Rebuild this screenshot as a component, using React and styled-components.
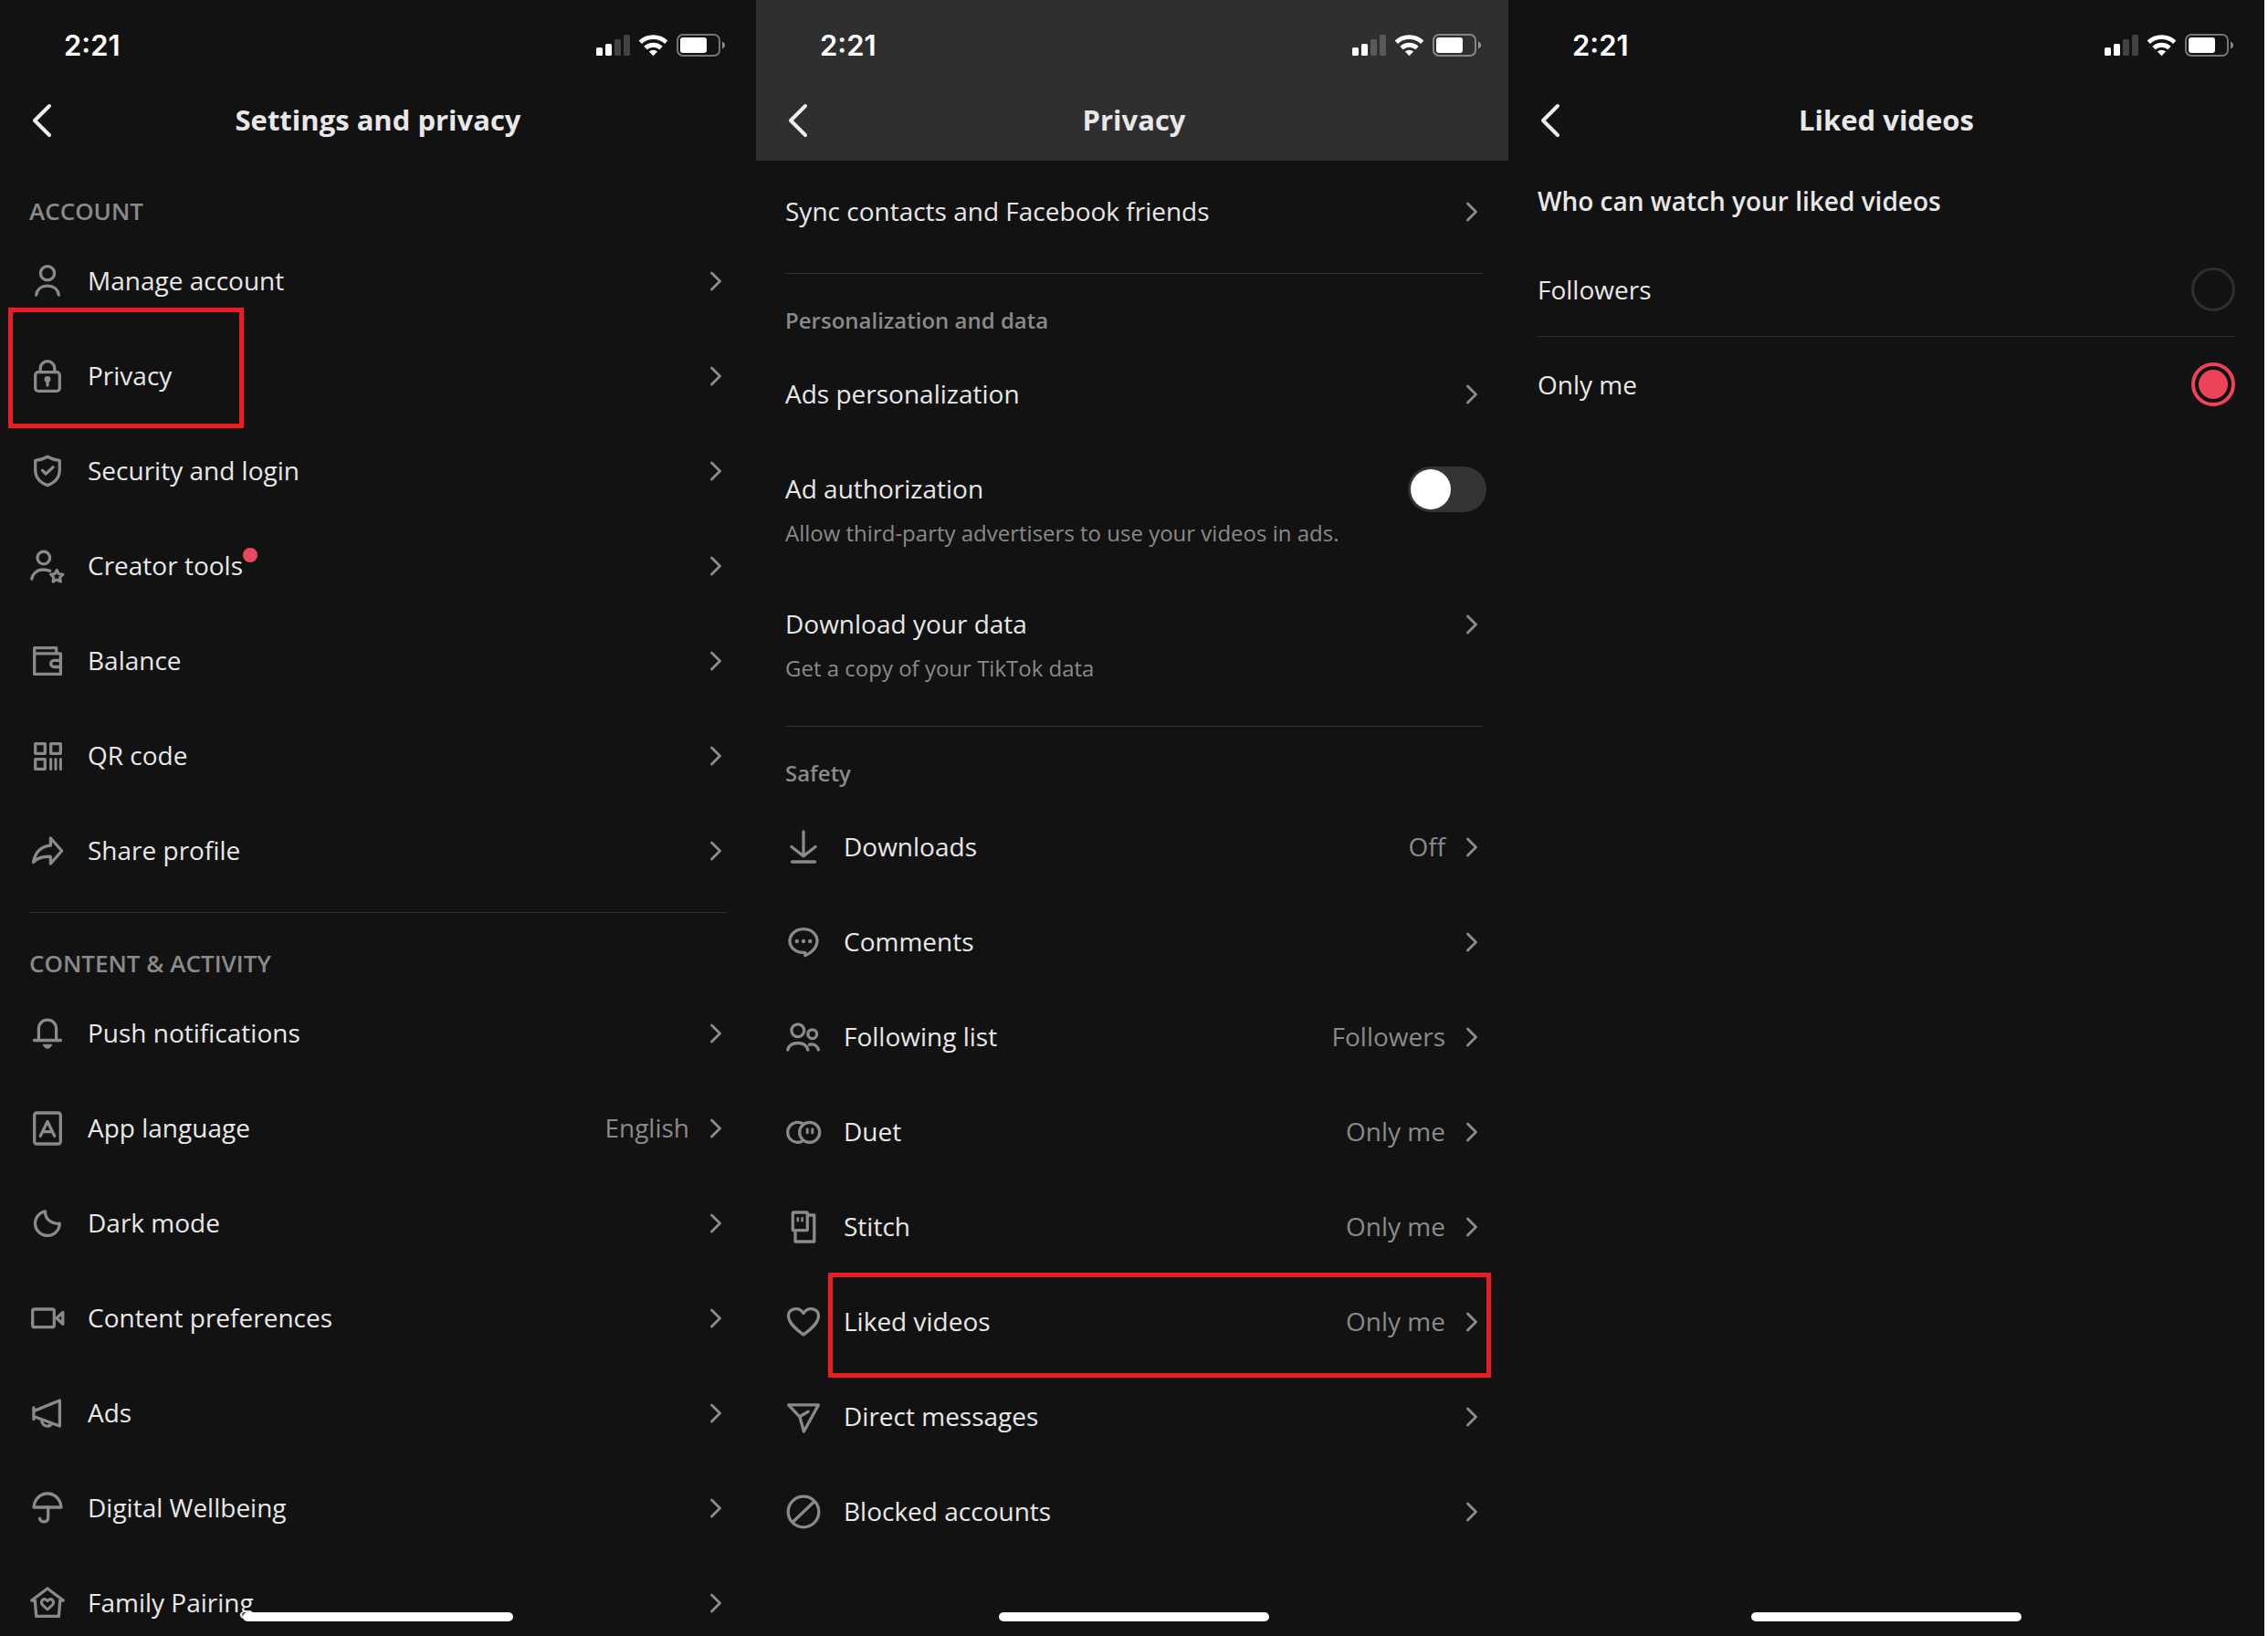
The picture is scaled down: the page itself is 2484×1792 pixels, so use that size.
import React, { useState } from "react";
import styled, { createGlobalStyle, css } from "styled-components";

const color = {
  page: "#ffffff",
  bg: "#121212",
  raised: "#2f2f2f",
  text: "#e8e8e8",
  muted: "#8a8a8a",
  line: "#2d2d2d",
  accent: "#ec4359",
  mark: "#ed1c24",
};

const GlobalStyle = createGlobalStyle`
  *, *::before, *::after { box-sizing: border-box; }
  body {
    margin: 0;
    background: ${color.page};
    color: ${color.text};
    font-family: "Open Sans", "Noto Sans", sans-serif;
  }
`;

const Screens = styled.main`
  display: grid;
  grid-template-columns: 207fr 206fr 207fr;
  height: 100vh;
  padding-right: 4px;
  overflow: hidden;
`;

const Phone = styled.section`
  position: relative;
  min-width: 0;
  overflow: hidden;
  background: ${color.bg};
`;

const PhoneContent = styled.div`
  position: relative;
  width: ${(p) => (p.$bleed ? "calc(100% + 4px)" : "100%")};
  height: 100%;
`;

const Header = styled.header`
  background: ${(p) => (p.$raised ? color.raised : color.bg)};
`;

const StatusBar = styled.div`
  display: flex;
  align-items: center;
  justify-content: space-between;
  height: 88px;
  padding: 12px 32px 0 70px;
`;

const Clock = styled.time`
  color: #ffffff;
  font-family: Inter, sans-serif;
  font-size: 31px;
  font-weight: 600;
  line-height: 40px;
`;

const StatusIcons = styled.svg`
  display: block;
  width: 144px;
  height: 28px;
`;

const NavBar = styled.nav`
  display: grid;
  grid-template-columns: 1fr auto 1fr;
  align-items: center;
  height: 88px;
  padding: 0 32px;
`;

const BackButton = styled.button`
  display: flex;
  justify-self: start;
  padding: 0;
  border: 0;
  background: none;
  color: #ededed;
  cursor: pointer;
`;

const Title = styled.h1`
  margin: 0;
  padding-bottom: 2px;
  font-size: 31px;
  font-weight: 700;
  line-height: 42px;
`;

const Group = styled.section`
  padding: ${(p) => p.$top}px 32px 0;
`;

const GroupLabel = styled.h2`
  margin: 0 0 ${(p) => (p.$caps ? 8 : 12)}px;
  color: ${color.muted};
  font-size: ${(p) => (p.$caps ? 26 : 24)}px;
  font-weight: 600;
  line-height: 34px;
`;

const Divider = styled.hr`
  height: 1px;
  margin: 15px 32px 0;
  border: 0;
  background: ${color.line};
`;

const List = styled.ul`
  margin: 0;
  padding: 0;
  list-style: none;
`;

const marks = {
  start: css`
    top: -23px;
    left: -23px;
    width: 258px;
    height: 132px;
  `,
  wide: css`
    top: -2px;
    left: 47px;
    right: -9px;
    height: 115px;
  `,
};

const Item = styled.li`
  position: relative;

  ${(p) =>
    p.$mark &&
    css`
      &::after {
        content: "";
        position: absolute;
        border: 5px solid ${color.mark};
        pointer-events: none;
        ${marks[p.$mark]}
      }
    `}
`;

const rowLayout = css`
  display: flex;
  align-items: flex-start;
  padding: 32px 0;
  color: inherit;
  text-decoration: none;
`;

const RowLink = styled.a`
  ${rowLayout}
`;

const SwitchRow = styled.div`
  ${rowLayout}
`;

const RowText = styled.span`
  display: flex;
  flex: 1;
  flex-direction: column;
  align-items: flex-start;
  gap: 14px;
  min-width: 0;
`;

const RowTitle = styled.span`
  position: relative;
  font-size: 28px;
  line-height: 38px;
`;

const RowNote = styled.span`
  color: ${color.muted};
  font-size: 24px;
  line-height: 32px;
`;

const RowValue = styled.span`
  margin-right: 22px;
  color: ${color.muted};
  font-size: 28px;
  line-height: 38px;
`;

const NewDot = styled.span`
  position: absolute;
  top: 0;
  left: 100%;
  width: 16px;
  height: 16px;
  border-radius: 50%;
  background: #ea4a5f;
`;

const RowIcon = styled.svg`
  flex: none;
  width: 40px;
  height: 40px;
  margin-right: 24px;
  color: ${color.muted};
`;

const ChevronIcon = styled.svg`
  flex: none;
  width: 14px;
  height: 40px;
  margin-right: 5px;
  color: ${color.muted};
`;

const Switch = styled.input`
  flex: none;
  appearance: none;
  width: 86px;
  height: 50px;
  margin: -5px -4px;
  padding: 3px;
  border-radius: 25px;
  background: #343436;
  cursor: pointer;

  &::before {
    content: "";
    display: block;
    width: 44px;
    height: 44px;
    border-radius: 50%;
    background: #ffffff;
  }

  &:checked {
    background: ${color.accent};
  }

  &:checked::before {
    margin-left: auto;
  }
`;

const Choices = styled.fieldset`
  min-width: 0;
  margin: 0;
  padding: 24px 32px 0;
  border: 0;
`;

const ChoicesTitle = styled.legend`
  float: left;
  width: 100%;
  padding: 0 0 25px;
  font-size: 28px;
  font-weight: 600;
  line-height: 40px;
`;

const Choice = styled.label`
  display: flex;
  clear: both;
  align-items: center;
  justify-content: space-between;
  height: 104px;
  border-bottom: ${(p) => (p.$last ? "0" : `1px solid ${color.line}`)};
  font-size: 28px;
  line-height: 38px;
  cursor: pointer;
`;

const Radio = styled.input`
  appearance: none;
  display: grid;
  place-items: center;
  width: 48px;
  height: 48px;
  margin: 0;
  border: 3px solid ${color.raised};
  border-radius: 50%;
  cursor: pointer;

  &:checked {
    border: 4px solid ${color.accent};
  }

  &:checked::before {
    content: "";
    width: 32px;
    height: 32px;
    border-radius: 50%;
    background: ${color.accent};
  }
`;

const HomeIndicator = styled.div`
  position: absolute;
  bottom: 16px;
  left: 50%;
  width: 296px;
  height: 10px;
  margin-left: -148px;
  border-radius: 5px;
  background: #ffffff;
`;

const icons = {
  person: (
    <>
      <circle cx="20" cy="11.3" r="7.6" />
      <path d="M7.6 35C8.6 28.8 13.6 25.2 20 25.2S31.4 28.8 32.4 35" />
    </>
  ),
  lock: (
    <>
      <rect x="6.7" y="15.7" width="26.6" height="20.6" rx="3" />
      <path d="M12.2 15.5V11.5a7.8 7.8 0 0 1 15.6 0v4" />
      <path d="M20 24v6" />
      <circle cx="20" cy="23.5" r="1.8" fill="currentColor" />
    </>
  ),
  shield: (
    <>
      <path d="M20 4.2c4 2.3 8.5 3.8 13.3 4.1v10c0 8.2-5 14.5-13.3 17.3C11.7 32.8 6.7 26.5 6.7 18.3v-10C11.5 8 16 6.5 20 4.2z" />
      <path d="M14.5 19.2l3.7 3.9 7.8-7.4" />
    </>
  ),
  creator: (
    <>
      <circle cx="15.8" cy="11" r="6.8" />
      <path d="M2.7 34.2C4 27.8 9 24 15.5 24c2.700 0 5 .5 7.200 1.400" />
      <path
        strokeWidth="3"
        d="M30.200 24.300l2.100 4.200 4.700.7-3.400 3.300.8 4.600-4.200-2.200-4.200 2.200.8-4.600-3.400-3.300 4.700-.7z"
      />
    </>
  ),
  wallet: (
    <>
      <path d="M5.700 11.800h28.700v22.600H5.700z" />
      <path d="M5.700 11.800V5.700h24v6" />
      <path d="M34 19.300h-6.700a3.600 3.600 0 0 0 0 7.200H34" />
    </>
  ),
  qr: (
    <>
      <path d="M6.700 6.700h10.600v10.600H6.700zM23.700 6.700h10.600v10.600H23.700zM6.700 23.700h10.600v10.600H6.700z" />
      <path strokeWidth="3" d="M23.600 23.500v11M29 23.500v11M34.400 23.500v11" />
    </>
  ),
  share: (
    <path d="M23.400 6L35.700 20 23.400 34v-7.700C14.500 26 8.500 27.500 4.500 32.500 6.600 22 13 15 23.400 14.200z" />
  ),
  bell: (
    <>
      <path d="M5.500 27.500h29M10.400 27V14.700a9.600 9.600 0 0 1 19.200 0V27" />
      <path
        stroke="none"
        fill="currentColor"
        d="M15.500 31.700h9c.6 0 .8.500.5 1-.9 2.300-2.800 4-5 4s-4.100-1.700-5-4c-.3-.5-.1-1 .5-1z"
      />
    </>
  ),
  language: (
    <>
      <rect x="5.700" y="3" width="28.600" height="34" rx="2.500" />
      <path d="M12.300 28.300L20 12.500l7.700 15.800M15 23.600h10" />
    </>
  ),
  moon: (
    <path d="M17.600 6.800A13.400 13.400 0 1 0 33.300 20.200C24.500 21 17 15.500 17.600 6.800z" />
  ),
  camera: (
    <>
      <rect x="3.700" y="10" width="23.600" height="19.700" rx="2" />
      <path d="M30 19.800l6.800-6.300v12.800z" />
    </>
  ),
  megaphone: (
    <>
      <path d="M4.900 14v12.500M5 17.600L33.400 6v28L5 23.500" />
      <path d="M13.600 27.500c.4 4 3 6.700 6.300 6.700 2 0 3.600-1 4.700-2.700" />
    </>
  ),
  umbrella: (
    <>
      <path d="M5 19C5.600 10.300 11.800 4 20 4s14.400 6.300 15 15z" />
      <path d="M20.700 19v11.500c0 5.400-8 5.700-9.200.8" />
    </>
  ),
  home: (
    <>
      <path d="M2.700 17L20 4l17.300 13h-3.500l-1.400 17.300H7.700L6.300 17z" />
      <path
        strokeWidth="3"
        d="M20 27l-5.500-5.200c-2.700-3 .4-7.500 3.800-5.700.8.400 1.300 1 1.700 1.700.4-.7.900-1.300 1.700-1.700 3.400-1.800 6.500 2.700 3.800 5.700z"
      />
    </>
  ),
  download: (
    <path d="M20 3v26.500M6.900 19.500L20 29.700l13.100-10.200M7.500 36h25" />
  ),
  comment: (
    <>
      <path d="M21.800 34.600v-3.300H20C11.500 31.300 5 25.900 5 18.700S11.500 5.700 20 5.700s15 5.600 15 12.800c0 7.500-6.500 13.400-13.200 16.100z" />
      <g fill="currentColor" stroke="none">
        <circle cx="12.800" cy="19" r="2.200" />
        <circle cx="20" cy="19" r="2.200" />
        <circle cx="27.200" cy="19" r="2.200" />
      </g>
    </>
  ),
  people: (
    <>
      <circle cx="13.800" cy="12.700" r="6.900" />
      <circle cx="29.700" cy="16.700" r="4.900" />
      <path d="M2.700 34C4 29 8.500 26.500 13.800 26.500S23.600 29 24.900 34" />
      <path d="M26.500 28.200c4.800-1.300 8.800 1 10 5.800" />
    </>
  ),
  duet: (
    <>
      <circle cx="26.700" cy="20.300" r="11" />
      <path d="M19.500 11A11 11 0 1 0 19.500 29.600" />
      <path strokeWidth="3" d="M24.200 16.700v4M29.800 16.700v4" />
    </>
  ),
  stitch: (
    <>
      <rect x="8.300" y="4" width="16" height="19.700" rx="1" />
      <path d="M26 7h5.800v29H11v-10.500" />
      <path strokeWidth="2.600" d="M13.800 10.300v3M18.600 10.300v3" />
    </>
  ),
  heart: (
    <path d="M20 34C14 29.500 3.500 22 3.500 13.600 3.500 5.500 14.500 2.200 20 10.500 25.500 2.200 36.500 5.500 36.500 13.600 36.500 22 26 29.500 20 34z" />
  ),
  send: (
    <path d="M3.600 6.900h32.800L20.400 36 16 20.200zM16.200 19.500l9-5.300" />
  ),
  blocked: (
    <>
      <circle cx="20" cy="20" r="16.800" />
      <path d="M31.500 9L8.500 31" />
    </>
  ),
};

function Icon({ name }) {
  return (
    <RowIcon
      viewBox="0 0 40 40"
      fill="none"
      stroke="currentColor"
      strokeWidth="3.3"
      strokeLinecap="round"
      strokeLinejoin="round"
      aria-hidden="true"
    >
      {icons[name]}
    </RowIcon>
  );
}

function Chevron() {
  return (
    <ChevronIcon viewBox="0 0 14 40" fill="none" aria-hidden="true">
      <path
        d="M2.500 11l9 9-9 9"
        stroke="currentColor"
        strokeWidth="3"
        strokeLinecap="round"
        strokeLinejoin="round"
      />
    </ChevronIcon>
  );
}

function PhoneHeader({ title, raised }) {
  return (
    <Header $raised={raised}>
      <StatusBar>
        <Clock>2:21</Clock>
        <StatusIcons viewBox="1 0 144 28" fill="#ffffff" aria-hidden="true">
          <rect x="2" y="16" width="7" height="9" rx="1.500" />
          <rect x="12" y="12" width="7" height="13" rx="1.500" />
          <g opacity="0.2">
            <rect x="22" y="7" width="7" height="18" rx="1.500" />
            <rect x="32" y="2" width="7" height="23" rx="1.500" />
          </g>
          <path d="M64.500 25.200l-4.600-4.700a6.800 6.800 0 0 1 9.200 0z" />
          <g fill="none" stroke="#ffffff" strokeWidth="4.800">
            <path d="M56 16.600a12.500 12.500 0 0 1 17 0" />
            <path d="M50.300 10.300a20.700 20.700 0 0 1 28.400 0" />
          </g>
          <rect
            x="91"
            y="2"
            width="46"
            height="23"
            rx="6"
            fill="none"
            stroke="#ffffff"
            strokeOpacity="0.42"
            strokeWidth="2"
          />
          <rect x="94" y="5" width="29" height="17" rx="3" />
          <path d="M140 9.500c4 1.500 4 6.500 0 8z" opacity="0.5" />
        </StatusIcons>
      </StatusBar>
      <NavBar>
        <BackButton type="button" aria-label="Back">
          <svg width="28" height="40" viewBox="0 0 28 40" fill="none">
            <path
              d="M22 4L6 20l16 16"
              stroke="currentColor"
              strokeWidth="4"
              strokeLinecap="round"
              strokeLinejoin="round"
            />
          </svg>
        </BackButton>
        <Title>{title}</Title>
      </NavBar>
    </Header>
  );
}

function Row({ icon, title, note, value, isNew, mark }) {
  return (
    <Item $mark={mark}>
      <RowLink href="#">
        {icon && <Icon name={icon} />}
        <RowText>
          <RowTitle>
            {title}
            {isNew && <NewDot />}
          </RowTitle>
          {note && <RowNote>{note}</RowNote>}
        </RowText>
        {value && <RowValue>{value}</RowValue>}
        <Chevron />
      </RowLink>
    </Item>
  );
}

const accountRows = [
  { icon: "person", title: "Manage account" },
  { icon: "lock", title: "Privacy", mark: "start" },
  { icon: "shield", title: "Security and login" },
  { icon: "creator", title: "Creator tools", isNew: true },
  { icon: "wallet", title: "Balance" },
  { icon: "qr", title: "QR code" },
  { icon: "share", title: "Share profile" },
];

const contentRows = [
  { icon: "bell", title: "Push notifications" },
  { icon: "language", title: "App language", value: "English" },
  { icon: "moon", title: "Dark mode" },
  { icon: "camera", title: "Content preferences" },
  { icon: "megaphone", title: "Ads" },
  { icon: "umbrella", title: "Digital Wellbeing" },
  { icon: "home", title: "Family Pairing" },
];

const safetyRows = [
  { icon: "download", title: "Downloads", value: "Off" },
  { icon: "comment", title: "Comments" },
  { icon: "people", title: "Following list", value: "Followers" },
  { icon: "duet", title: "Duet", value: "Only me" },
  { icon: "stitch", title: "Stitch", value: "Only me" },
  { icon: "heart", title: "Liked videos", value: "Only me", mark: "wide" },
  { icon: "send", title: "Direct messages" },
  { icon: "blocked", title: "Blocked accounts" },
];

function Rows({ items }) {
  return (
    <List>
      {items.map((item) => (
        <Row key={item.title} {...item} />
      ))}
    </List>
  );
}

function SettingsScreen() {
  return (
    <Phone>
      <PhoneContent>
        <PhoneHeader title="Settings and privacy" />
        <Group $top={38}>
          <GroupLabel $caps>ACCOUNT</GroupLabel>
          <Rows items={accountRows} />
        </Group>
        <Divider />
        <Group $top={38}>
          <GroupLabel $caps>CONTENT &amp; ACTIVITY</GroupLabel>
          <Rows items={contentRows} />
        </Group>
        <HomeIndicator />
      </PhoneContent>
    </Phone>
  );
}

function PrivacyScreen() {
  const [adsAllowed, setAdsAllowed] = useState(false);
  return (
    <Phone>
      <PhoneContent $bleed>
        <PhoneHeader title="Privacy" raised />
        <Group $top={4}>
          <Rows items={[{ title: "Sync contacts and Facebook friends" }]} />
        </Group>
        <Divider />
        <Group $top={34}>
          <GroupLabel>Personalization and data</GroupLabel>
          <List>
            <Row title="Ads personalization" />
            <Item>
              <SwitchRow>
                <RowText>
                  <RowTitle as="label" htmlFor="ad-authorization">
                    Ad authorization
                  </RowTitle>
                  <RowNote id="ad-note">
                    Allow third-party advertisers to use your videos in ads.
                  </RowNote>
                </RowText>
                <Switch
                  type="checkbox"
                  role="switch"
                  id="ad-authorization"
                  aria-describedby="ad-note"
                  checked={adsAllowed}
                  onChange={(e) => setAdsAllowed(e.target.checked)}
                />
              </SwitchRow>
            </Item>
            <Row title="Download your data" note="Get a copy of your TikTok data" />
          </List>
        </Group>
        <Divider />
        <Group $top={34}>
          <GroupLabel>Safety</GroupLabel>
          <Rows items={safetyRows} />
        </Group>
        <HomeIndicator />
      </PhoneContent>
    </Phone>
  );
}

function LikedVideosScreen() {
  const options = ["Followers", "Only me"];
  const [audience, setAudience] = useState("Only me");
  return (
    <Phone>
      <PhoneContent>
        <PhoneHeader title="Liked videos" />
        <Choices>
          <ChoicesTitle>Who can watch your liked videos</ChoicesTitle>
          {options.map((option, i) => (
            <Choice key={option} $last={i === options.length - 1}>
              {option}
              <Radio
                type="radio"
                name="audience"
                value={option}
                checked={audience === option}
                onChange={() => setAudience(option)}
              />
            </Choice>
          ))}
        </Choices>
        <HomeIndicator />
      </PhoneContent>
    </Phone>
  );
}

export default function App() {
  return (
    <>
      <GlobalStyle />
      <Screens>
        <SettingsScreen />
        <PrivacyScreen />
        <LikedVideosScreen />
      </Screens>
    </>
  );
}
